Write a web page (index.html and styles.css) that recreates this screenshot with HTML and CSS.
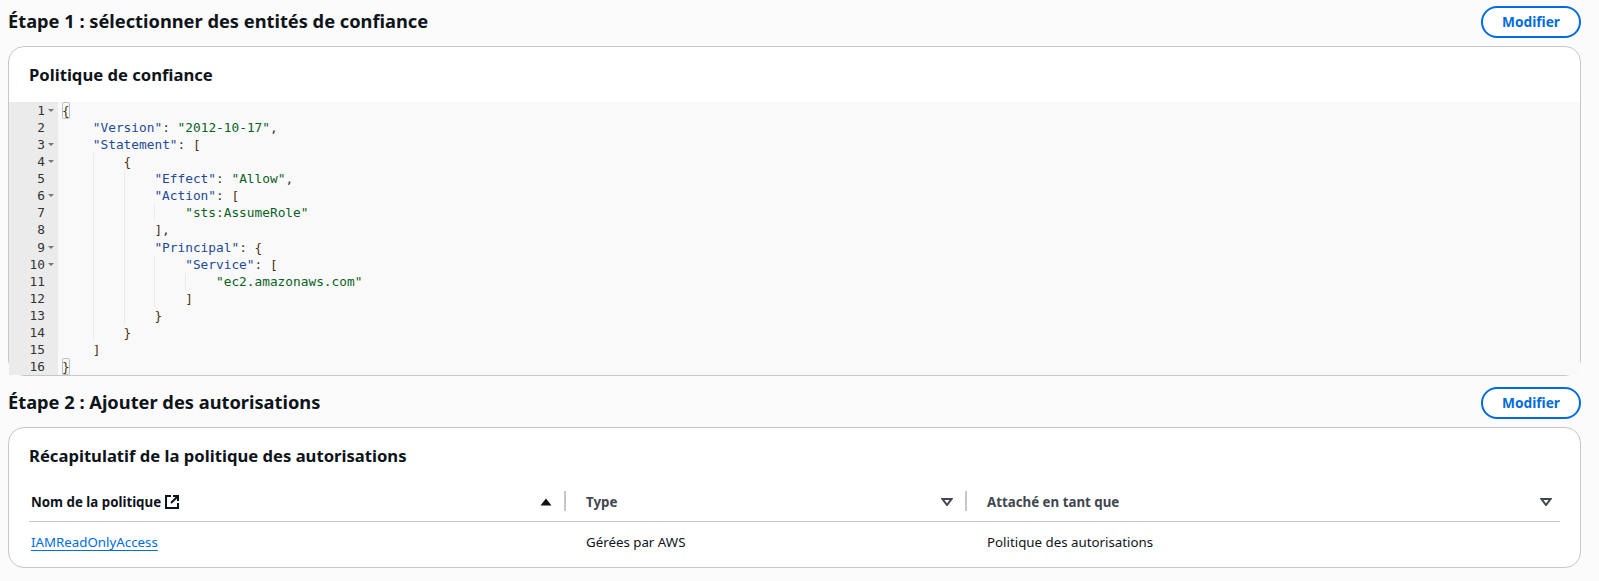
FILE: index.html
```html
<!DOCTYPE html>
<html lang="fr">
<head>
<meta charset="utf-8">
<title>Étapes</title>
<link rel="stylesheet" href="styles.css">
</head>
<body>
<section class="step step-one">
  <header class="step-head">
    <h2>Étape 1 : sélectionner des entités de confiance</h2>
    <button class="btn">Modifier</button>
  </header>
  <div class="card">
    <h3 class="card-title title-policy">Politique de confiance</h3>
    <div class="editor">
      <div class="gutter">
        <div class="num fold">1</div><div class="num">2</div><div class="num fold">3</div><div class="num fold">4</div>
        <div class="num">5</div><div class="num fold">6</div><div class="num">7</div><div class="num">8</div>
        <div class="num fold">9</div><div class="num fold">10</div><div class="num">11</div><div class="num">12</div>
        <div class="num">13</div><div class="num">14</div><div class="num">15</div><div class="num">16</div>
      </div>
      <div class="code">
        <div class="line"><span class="mb">{</span></div>
        <div class="line"><i class="g"></i><span class="k">"Version"</span><span class="p">: </span><span class="s">"2012-10-17"</span><span class="p">,</span></div>
        <div class="line"><i class="g"></i><span class="k">"Statement"</span><span class="p">: </span><span class="b">[</span></div>
        <div class="line"><i class="g"></i><i class="g r"></i><span class="b">{</span></div>
        <div class="line"><i class="g"></i><i class="g r"></i><i class="g r"></i><span class="k">"Effect"</span><span class="p">: </span><span class="s">"Allow"</span><span class="p">,</span></div>
        <div class="line"><i class="g"></i><i class="g r"></i><i class="g r"></i><span class="k">"Action"</span><span class="p">: </span><span class="b">[</span></div>
        <div class="line"><i class="g"></i><i class="g r"></i><i class="g r"></i><i class="g r"></i><span class="s">"sts:AssumeRole"</span></div>
        <div class="line"><i class="g"></i><i class="g r"></i><i class="g r"></i><span class="b">]</span><span class="p">,</span></div>
        <div class="line"><i class="g"></i><i class="g r"></i><i class="g r"></i><span class="k">"Principal"</span><span class="p">: </span><span class="b">{</span></div>
        <div class="line"><i class="g"></i><i class="g r"></i><i class="g r"></i><i class="g r"></i><span class="k">"Service"</span><span class="p">: </span><span class="b">[</span></div>
        <div class="line"><i class="g"></i><i class="g r"></i><i class="g r"></i><i class="g r"></i><i class="g r"></i><span class="s">"ec2.amazonaws.com"</span></div>
        <div class="line"><i class="g"></i><i class="g r"></i><i class="g r"></i><i class="g r"></i><span class="b">]</span></div>
        <div class="line"><i class="g"></i><i class="g r"></i><i class="g r"></i><span class="b">}</span></div>
        <div class="line"><i class="g"></i><i class="g r"></i><span class="b">}</span></div>
        <div class="line"><i class="g"></i><span class="b">]</span></div>
        <div class="line"><span class="mb">}</span></div>
      </div>
    </div>
  </div>
</section>
<section class="step step-two">
  <header class="step-head">
    <h2>Étape 2 : Ajouter des autorisations</h2>
    <button class="btn">Modifier</button>
  </header>
  <div class="card card-table">
    <h3 class="card-title">Récapitulatif de la politique des autorisations</h3>
    <div class="table">
      <div class="row head">
        <div class="cell col-a"><span>Nom de la politique</span>
          <svg class="ext" width="16" height="16" viewBox="0 0 16 16" fill="none" stroke="currentColor" stroke-width="2"><path d="M7 2H2v12h12V9"/><path d="M9 2h5v5"/><path d="M14 2 7 9"/></svg>
          <svg class="sort" width="12" height="8" viewBox="0 0 12 8"><path d="M6 .5 11.5 7.5H.5z" fill="#0f141a"/></svg>
        </div>
        <div class="cell col-b"><span>Type</span>
          <svg class="sort" width="12" height="8" viewBox="0 0 12 8"><path d="M1.5 1h9L6 7z" fill="none" stroke="#424650" stroke-width="2"/></svg>
        </div>
        <div class="cell col-c"><span>Attaché en tant que</span>
          <svg class="sort" width="12" height="8" viewBox="0 0 12 8"><path d="M1.5 1h9L6 7z" fill="none" stroke="#424650" stroke-width="2"/></svg>
        </div>
      </div>
      <div class="row body">
        <div class="cell col-a"><a href="#">IAMReadOnlyAccess</a></div>
        <div class="cell col-b">Gérées par AWS</div>
        <div class="cell col-c">Politique des autorisations</div>
      </div>
    </div>
  </div>
</section>
</body>
</html>
```
FILE: styles.css
```css
* { box-sizing: border-box; }
html, body { margin: 0; padding: 0; }
body {
  background: #fbfbfb;
  color: #0f141a;
  font-family: "Noto Sans", "Open Sans", sans-serif;
  font-size: 14px;
  padding: 6px 18px 0 8px;
  height: 581px;
  overflow: hidden;
}
.step-head {
  display: flex;
  justify-content: space-between;
  align-items: flex-start;
  height: 40px;
}
.step-head h2 {
  margin: 0;
  font-size: 18.25px;
  line-height: 30px;
  font-weight: 700;
}
.btn {
  width: 100px;
  height: 32px;
  border: 2px solid #006ce0;
  border-radius: 20px;
  background: #fff;
  color: #006ce0;
  font: 700 13.7px/20px "Noto Sans", sans-serif;
  padding: 0;
}
.card {
  background: #fff;
  border: 1px solid #c6c6cd;
  border-radius: 16px;
}
.card-title {
  margin: 0;
  padding: 15px 20px 0;
  font-size: 16.65px;
  line-height: 26px;
  font-weight: 700;
}
.title-policy { height: 55px; }
.step-one { height: 381px; }
.editor {
  display: flex;
  background: #f9f9f9;
  height: 273px;
  font-family: "DejaVu Sans Mono", monospace;
  font-size: 12.8px;
  line-height: 17.07px;
}
.gutter {
  width: 49px;
  background: #ebebeb;
  color: #333;
  flex: none;
}
.num {
  position: relative;
  text-align: right;
  padding-right: 13px;
  height: 17.07px;
}
.fold::after {
  content: "";
  position: absolute;
  right: 4px;
  top: 7px;
  border-style: solid;
  border-width: 3px 3px 0;
  border-color: #777 transparent transparent;
}
.code { padding-left: 4px; flex: 1; }
.line { height: 17.07px; display: flex; white-space: pre; }
.g { display: block; width: 30.8px; flex: none; }
.g.r { box-shadow: inset 1px 0 0 #eaeaea; }
.k { color: #234a97; }
.s { color: #0b6125; }
.p { color: #333; }
.b { color: #4a3410; }
.mb { color: #4a3410; box-shadow: inset 0 0 0 1px #c0c0c8; border-radius: 2px; height: 17px; }
.card-table { height: 141px; }
.table { margin: 12px 20px 0 20px; }
.row { display: flex; }
.row.head { height: 41px; border-bottom: 1px solid #c6c6cd; font-weight: 700; font-size: 13.3px; padding-top: 1px; }
.row.body { height: 40px; font-size: 13.3px; }
.cell { display: flex; align-items: center; padding-left: 2px; }
.head .cell { position: relative; }
.head .col-a::after, .head .col-b::after {
  content: "";
  position: absolute;
  right: 0;
  top: 9px;
  width: 2px;
  height: 20px;
  background: #c6c6cd;
}
.col-a { width: 537px; }
.col-b { width: 401px; padding-left: 20px; }
.col-c { flex: 1; padding-left: 20px; }
.ext { margin-left: 3px; }
.sort { margin-left: auto; margin-right: 14px; }
.col-c .sort { margin-right: 8px; }
.col-b, .col-c { color: #424650; }
.body .col-b, .body .col-c { color: #0f141a; }
a { color: #006ce0; text-decoration: underline; text-underline-offset: 3px; }
```
